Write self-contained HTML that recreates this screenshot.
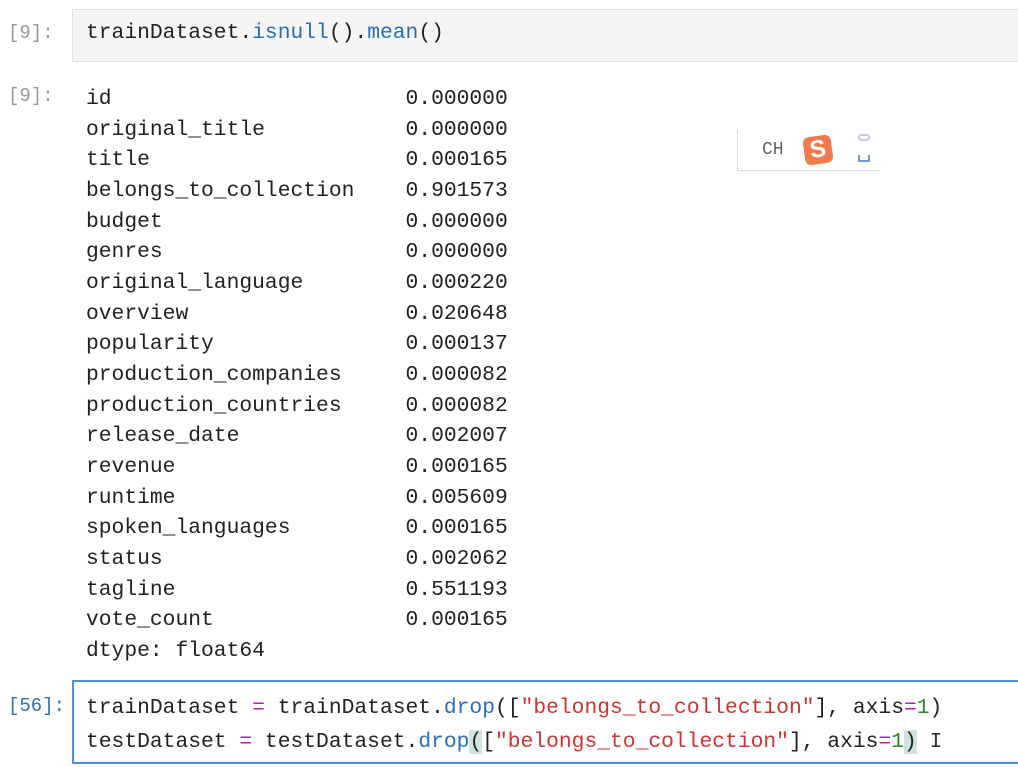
<!DOCTYPE html>
<html><head><meta charset="utf-8"><style>
body{margin:0;background:#fff;width:1018px;height:767px;overflow:hidden;position:relative;font-family:"Liberation Mono",monospace;}
.p{position:absolute;left:8px;color:#999;font-size:19px;}
.mono{font-size:21.3px;white-space:pre;position:absolute;left:86px;color:#222;}
.c1{position:absolute;left:72px;top:9px;width:960px;height:51px;background:#f5f5f5;border:1px solid #e0e0e0;}
.c2{position:absolute;left:72px;top:680px;width:960px;height:84px;border:2px solid #4a90d9;box-sizing:border-box;}
.b{color:#2a6fb5}.o{color:#a626a4}.s{color:#c33}.n{color:#2a8a2a}.hl{background:#cfe3e0}
</style></head><body>
<div class="c1"></div>
<div class="p" style="top:22px">[9]:</div>
<div class="mono" style="top:21px">trainDataset.<span class="b">isnull</span>().<span class="b">mean</span>()</div>
<div class="p" style="top:85px">[9]:</div>
<div class="mono" style="top:84px;line-height:30.65px">id                       0.000000
original_title           0.000000
title                    0.000165
belongs_to_collection    0.901573
budget                   0.000000
genres                   0.000000
original_language        0.000220
overview                 0.020648
popularity               0.000137
production_companies     0.000082
production_countries     0.000082
release_date             0.002007
revenue                  0.000165
runtime                  0.005609
spoken_languages         0.000165
status                   0.002062
tagline                  0.551193
vote_count               0.000165
dtype: float64</div>
<div style="position:absolute;left:737px;top:130px;width:142px;height:40px;border-left:1px dotted #bbb;border-bottom:1px solid #ddd;"></div>
<div style="position:absolute;left:762px;top:140px;font-size:18px;color:#666;">CH</div>
<div style="position:absolute;left:804px;top:136px;width:28px;height:28px;background:#f07a4a;border-radius:6px;transform:rotate(-8deg);color:#fff;font:bold 24px 'Liberation Sans',sans-serif;text-align:center;line-height:28px;">S</div>
<div style="position:absolute;left:858px;top:134px;width:12px;height:7px;border:2px solid #bcd;border-radius:4px;box-sizing:border-box"></div>
<div style="position:absolute;left:858px;top:155px;width:12px;height:7px;border:2px solid #79b;border-top:none;box-sizing:border-box"></div>
<div class="c2"></div>
<div class="p" style="top:695px;color:#3070b0">[56]:</div>
<div class="mono" style="top:691px;line-height:34px">trainDataset <span class="o">=</span> trainDataset.<span class="b">drop</span>([<span class="s">"belongs_to_collection"</span>], axis<span class="o">=</span><span class="n">1</span>)
testDataset <span class="o">=</span> testDataset.<span class="b">drop</span><span class="hl">(</span>[<span class="s">"belongs_to_collection"</span>], axis<span class="o">=</span><span class="n">1</span><span class="hl">)</span> <span style="color:#333">I</span></div>
</body></html>
